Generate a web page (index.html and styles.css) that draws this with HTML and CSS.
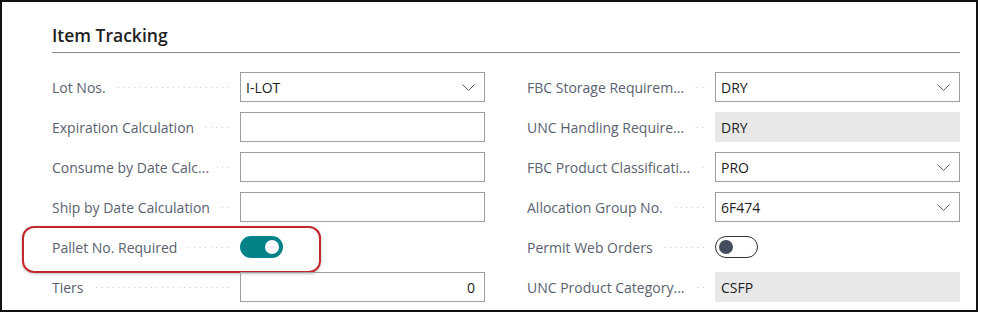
FILE: index.html
```html
<!DOCTYPE html>
<html lang="en">
<head>
    <meta charset="UTF-8">
    <meta name="viewport" content="width=device-width, initial-scale=1.0">
    <title>Item Tracking</title>
    <link rel="stylesheet" href="styles.css">
</head>
<body>
    <div class="frame">
        <section class="fasttab">
            <h2 class="fasttab-title">Item Tracking</h2>
            <div class="fields">
                <div class="column">
                    <div class="field">
                        <label class="field-label"><span class="caption">Lot Nos.</span><span class="leader"></span></label>
                        <div class="control select">
                            <span class="value">I-LOT</span>
                            <svg class="chevron" width="13" height="7" viewBox="0 0 13 7"><polyline points="0.5,0.5 6.5,6.5 12.5,0.5"/></svg>
                        </div>
                    </div>
                    <div class="field">
                        <label class="field-label"><span class="caption">Expiration Calculation</span><span class="leader"></span></label>
                        <div class="control"><span class="value"></span></div>
                    </div>
                    <div class="field">
                        <label class="field-label"><span class="caption">Consume by Date Calc...</span><span class="leader"></span></label>
                        <div class="control"><span class="value"></span></div>
                    </div>
                    <div class="field">
                        <label class="field-label"><span class="caption">Ship by Date Calculation</span><span class="leader"></span></label>
                        <div class="control"><span class="value"></span></div>
                    </div>
                    <div class="field highlighted">
                        <label class="field-label"><span class="caption">Pallet No. Required</span><span class="leader"></span></label>
                        <div class="toggle-cell"><span class="toggle on"><span class="knob"></span></span></div>
                    </div>
                    <div class="field">
                        <label class="field-label"><span class="caption">Tiers</span><span class="leader"></span></label>
                        <div class="control number"><span class="value">0</span></div>
                    </div>
                </div>
                <div class="column">
                    <div class="field">
                        <label class="field-label"><span class="caption">FBC Storage Requirem...</span><span class="leader"></span></label>
                        <div class="control select">
                            <span class="value">DRY</span>
                            <svg class="chevron" width="13" height="7" viewBox="0 0 13 7"><polyline points="0.5,0.5 6.5,6.5 12.5,0.5"/></svg>
                        </div>
                    </div>
                    <div class="field">
                        <label class="field-label"><span class="caption">UNC Handling Require...</span><span class="leader"></span></label>
                        <div class="control readonly"><span class="value">DRY</span></div>
                    </div>
                    <div class="field">
                        <label class="field-label"><span class="caption">FBC Product Classificati...</span><span class="leader"></span></label>
                        <div class="control select">
                            <span class="value">PRO</span>
                            <svg class="chevron" width="13" height="7" viewBox="0 0 13 7"><polyline points="0.5,0.5 6.5,6.5 12.5,0.5"/></svg>
                        </div>
                    </div>
                    <div class="field">
                        <label class="field-label"><span class="caption">Allocation Group No.</span><span class="leader"></span></label>
                        <div class="control select">
                            <span class="value">6F474</span>
                            <svg class="chevron" width="13" height="7" viewBox="0 0 13 7"><polyline points="0.5,0.5 6.5,6.5 12.5,0.5"/></svg>
                        </div>
                    </div>
                    <div class="field">
                        <label class="field-label"><span class="caption">Permit Web Orders</span><span class="leader"></span></label>
                        <div class="toggle-cell"><span class="toggle off"><span class="knob"></span></span></div>
                    </div>
                    <div class="field">
                        <label class="field-label"><span class="caption">UNC Product Category...</span><span class="leader"></span></label>
                        <div class="control readonly"><span class="value">CSFP</span></div>
                    </div>
                </div>
            </div>
        </section>
    </div>
</body>
</html>
```

FILE: styles.css
```css
* { box-sizing: border-box; }
body { margin: 0; background: #fff; font-family: "Open Sans", "Noto Sans", Arial, sans-serif; }

.frame { width: 978px; height: 312px; border: 2px solid #111; padding: 21px 0 0 50px; overflow: hidden; }

.fasttab { width: 908px; }
.fasttab-title { margin: 0; padding: 0 0 4px; font-size: 17.5px; line-height: 25px; font-weight: 600; color: #212121; border-bottom: 1px solid #858b94; }

.fields { display: grid; grid-template-columns: 433px 433px; column-gap: 42px; margin-top: 19px; }
.column { display: flex; flex-direction: column; gap: 10px; }

.field { position: relative; display: grid; grid-template-columns: 188px 245px; height: 30px; }
.field-label { display: flex; align-items: center; min-width: 0; font-size: 14px; color: #59626f; }
.caption { white-space: nowrap; }
.leader { flex: 1; height: 2px; margin: 1px 7px 0 8px; background-image: linear-gradient(to right, #bcc1c8 1px, transparent 1px); background-size: 5.5px 1px; background-repeat: repeat-x; background-position: right center; }

.control { display: flex; align-items: center; height: 30px; border: 1px solid #a19f9d; padding: 0 9px 0 5px; font-size: 14px; color: #212121; }
.control .value { flex: 1; }
.control.number .value { text-align: right; }
.control.readonly { background: #e8e8e8; border-color: #e8e8e8; }
.chevron { fill: none; stroke: #605e5c; stroke-width: 1; }

.toggle-cell { display: flex; align-items: center; }
.toggle { position: relative; display: block; width: 43px; height: 22px; border-radius: 11px; }
.toggle .knob { position: absolute; top: 4px; width: 14px; height: 14px; border-radius: 50%; }
.toggle.on { background: #038387; }
.toggle.on .knob { right: 4px; background: #fff; }
.toggle.off { background: #fff; border: 1.5px solid #323130; }
.toggle.off .knob { top: 2.5px; left: 2.5px; background: #434d5e; }

.highlighted::after { content: ""; position: absolute; left: -30px; top: -6px; width: 295px; height: 43px; border: 2px solid #c1272d; border-radius: 12px; box-shadow: 0 1px 3px rgba(0, 0, 0, 0.25); }
```
